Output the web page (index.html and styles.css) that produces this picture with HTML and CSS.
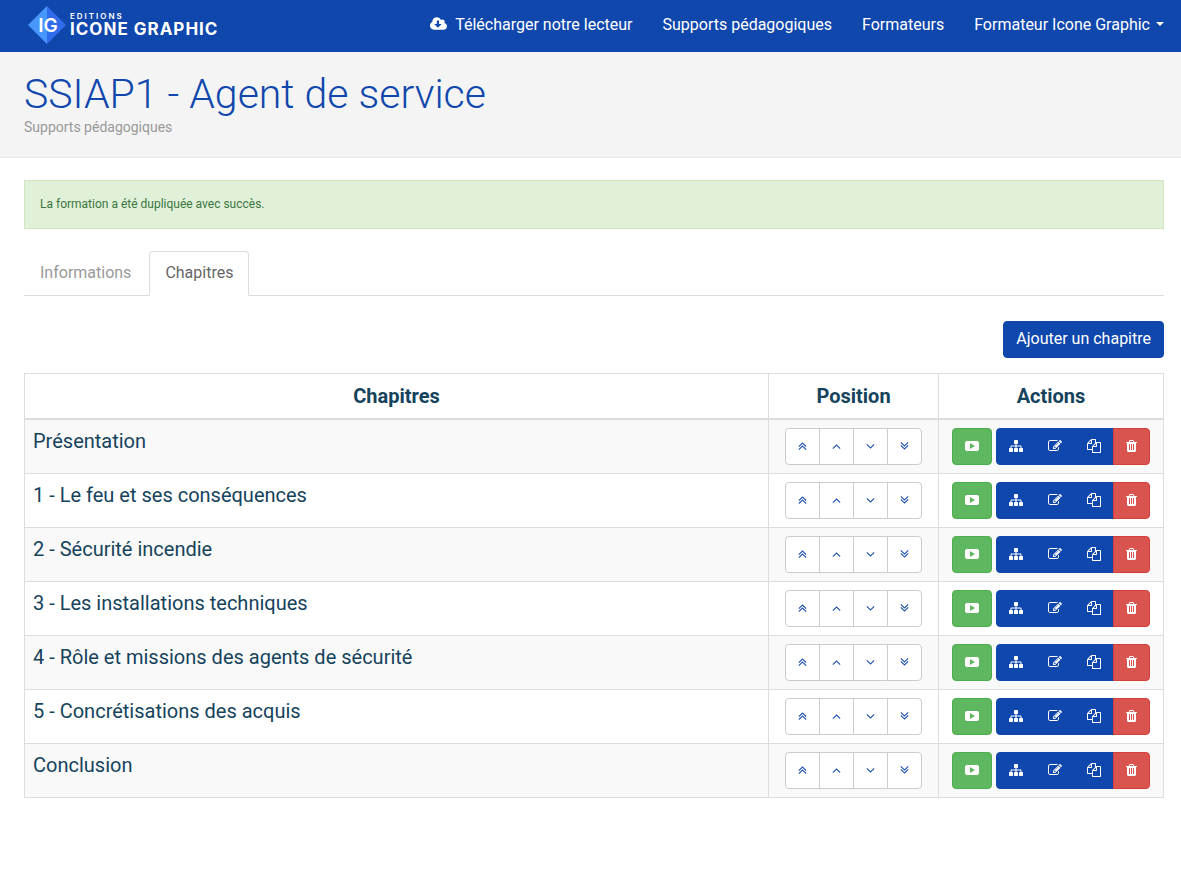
FILE: index.html
```html
<!DOCTYPE html>
<html lang="fr">
<head>
  <meta charset="utf-8">
  <title>SSIAP1 - Agent de service</title>
  <meta name="viewport" content="width=device-width, initial-scale=1">
  <link rel="stylesheet" href="styles.css">
</head>
<body>
  <!-- Icons -->
  <svg class="sprite" aria-hidden="true">
    <symbol id="cloud-download" viewBox="0 0 1920 1792"><path d="M1280 928q0-14-9-23t-23-9h-224v-352q0-13-9.500-22.500t-22.500-9.500h-192q-13 0-22.500 9.500t-9.500 22.500v352h-224q-13 0-22.500 9.500t-9.500 22.500q0 14 9 23l352 352q9 9 23 9t23-9l351-351q10-12 10-24zm640 224q0 159-112.500 271.500t-271.500 112.500h-1088q-185 0-316.500-131.500t-131.500-316.500q0-130 70-240t188-165q-2-30-2-43 0-212 150-362t362-150q156 0 285.500 87t188.500 231q71-62 166-62 106 0 181 75t75 181q0 76-41 138 130 31 213.500 135.500t83.500 238.500z"/></symbol>
    <symbol id="play" viewBox="0 0 14 14"><path fill-rule="evenodd" d="M2 2H12Q14 2 14 4V10Q14 12 12 12H2Q0 12 0 10V4Q0 2 2 2zM5 4V10L10 7z"/></symbol>
    <symbol id="sitemap" viewBox="0 0 1792 1792"><path d="M1792 1248v320q0 40-28 68t-68 28h-320q-40 0-68-28t-28-68v-320q0-40 28-68t68-28h96v-192h-512v192h96q40 0 68 28t28 68v320q0 40-28 68t-68 28h-320q-40 0-68-28t-28-68v-320q0-40 28-68t68-28h96v-192h-512v192h96q40 0 68 28t28 68v320q0 40-28 68t-68 28h-320q-40 0-68-28t-28-68v-320q0-40 28-68t68-28h96v-192q0-52 38-90t90-38h512v-192h-96q-40 0-68-28t-28-68v-320q0-40 28-68t68-28h320q40 0 68 28t28 68v320q0 40-28 68t-68 28h-96v192h512q52 0 90 38t38 90v192h96q40 0 68 28t28 68z"/></symbol>
    <symbol id="edit" viewBox="0 0 1792 1792"><path d="M888 1184l116-116-152-152-116 116v56h96v96h56zm440-720q-16-16-33 1l-350 350q-17 17-1 33t33-1l350-350q17-17 1-33zm80 594v190q0 119-84.500 203.500t-203.500 84.500h-832q-119 0-203.500-84.500t-84.500-203.500v-832q0-119 84.500-203.500t203.500-84.500h832q63 0 117 25 15 7 18 23 3 17-9 29l-49 49q-14 14-32 8-23-6-45-6h-832q-66 0-113 47t-47 113v832q0 66 47 113t113 47h832q66 0 113-47t47-113v-126q0-13 9-22l64-64q15-15 35-7t20 29zm-96-738l288 288-672 672h-288v-288zm444 132l-92 92-288-288 92-92q28-28 68-28t68 28l152 152q28 28 28 68t-28 68z"/></symbol>
    <symbol id="copy" viewBox="0 0 1792 1792"><path d="M1696 384q40 0 68 28t28 68v1216q0 40-28 68t-68 28h-960q-40 0-68-28t-28-68v-288h-544q-40 0-68-28t-28-68v-672q0-40 20-88t48-76l408-408q28-28 76-48t88-20h416q40 0 68 28t28 68v328q68-40 128-40h416zm-544 213l-299 299h299v-299zm-640-384l-299 299h299v-299zm196 647l316-316v-416h-384v416q0 40-28 68t-68 28h-416v640h512v-256q0-40 20-88t48-76zm956 804v-1152h-384v416q0 40-28 68t-68 28h-416v640h896z"/></symbol>
    <symbol id="trash" viewBox="192 0 1408 1792"><path d="M704 1376v-704q0-14-9-23t-23-9h-64q-14 0-23 9t-9 23v704q0 14 9 23t23 9h64q14 0 23-9t9-23zm256 0v-704q0-14-9-23t-23-9h-64q-14 0-23 9t-9 23v704q0 14 9 23t23 9h64q14 0 23-9t9-23zm256 0v-704q0-14-9-23t-23-9h-64q-14 0-23 9t-9 23v704q0 14 9 23t23 9h64q14 0 23-9t9-23zm-544-992h448l-48-117q-7-9-17-11h-317q-10 2-17 11zm928 32v64q0 14-9 23t-23 9h-96v948q0 83-47 143.500t-113 60.500h-832q-66 0-113-58.500t-47-141.500v-952h-96q-14 0-23-9t-9-23v-64q0-14 9-23t23-9h309l70-167q15-37 54-63t79-26h320q40 0 79 26t54 63l70 167h309q14 0 23 9t9 23z"/></symbol>
    <symbol id="up" viewBox="320 0 1152 1792"><path d="M1395 1184q0 13-10 23l-50 50q-10 10-23 10t-23-10l-393-393-393 393q-10 10-23 10t-23-10l-50-50q-10-10-10-23t10-23l466-466q10-10 23-10t23 10l466 466q10 10 10 23z"/></symbol>
    <symbol id="down" viewBox="320 0 1152 1792"><path d="M1395 736q0 13-10 23l-466 466q-10 10-23 10t-23-10l-466-466q-10-10-10-23t10-23l50-50q10-10 23-10t23 10l393 393 393-393q10-10 23-10t23 10l50 50q10 10 10 23z"/></symbol>
    <symbol id="double-up" viewBox="320 0 1152 1792"><path d="M1395 1312q0 13-10 23l-50 50q-10 10-23 10t-23-10l-393-393-393 393q-10 10-23 10t-23-10l-50-50q-10-10-10-23t10-23l466-466q10-10 23-10t23 10l466 466q10 10 10 23zm0-384q0 13-10 23l-50 50q-10 10-23 10t-23-10l-393-393-393 393q-10 10-23 10t-23-10l-50-50q-10-10-10-23t10-23l466-466q10-10 23-10t23 10l466 466q10 10 10 23z"/></symbol>
    <symbol id="double-down" viewBox="320 0 1152 1792"><path d="M1395 864q0 13-10 23l-466 466q-10 10-23 10t-23-10l-466-466q-10-10-10-23t10-23l50-50q10-10 23-10t23 10l393 393 393-393q10-10 23-10t23 10l50 50q10 10 10 23zm0-384q0 13-10 23l-466 466q-10 10-23 10t-23-10l-466-466q-10-10-10-23t10-23l50-50q10-10 23-10t23 10l393 393 393-393q10-10 23-10t23 10l50 50q10 10 10 23z"/></symbol>
  </svg>

  <header class="navbar">
    <a class="brand" href="#">
      <svg class="brand-logo" viewBox="0 0 38 38" aria-hidden="true">
        <path fill="#4797ff" d="M19 0v38L0 19z"/>
        <path fill="#2f6bea" d="M19 0l19 19-19 19z"/>
        <text class="brand-initials" x="20" y="26" text-anchor="middle">IG</text>
      </svg>
      <span class="brand-text">
        <span class="brand-small">EDITIONS</span>
        <span class="brand-name">ICONE GRAPHIC</span>
      </span>
    </a>
    <nav class="menu">
      <a href="#"><svg class="icon-cloud"><use href="#cloud-download"/></svg>Télécharger notre lecteur</a>
      <a href="#">Supports pédagogiques</a>
      <a href="#">Formateurs</a>
      <a href="#">Formateur Icone Graphic<span class="caret"></span></a>
    </nav>
  </header>

  <div class="page-header">
    <h1>SSIAP1 - Agent de service</h1>
    <p>Supports pédagogiques</p>
  </div>

  <main class="content">
    <div class="alert" role="alert">La formation a été dupliquée avec succès.</div>

    <nav class="tabs">
      <a href="#">Informations</a>
      <a class="active" href="#">Chapitres</a>
    </nav>

    <div class="toolbar">
      <button class="btn btn-primary" type="button">Ajouter un chapitre</button>
    </div>

    <table class="table">
      <thead>
        <tr>
          <th>Chapitres</th>
          <th class="col-position">Position</th>
          <th class="col-actions">Actions</th>
        </tr>
      </thead>
      <tbody id="chapters"></tbody>
    </table>
  </main>

  <script src="script.js"></script>
</body>
</html>
```

FILE: styles.css
```css
* {
  box-sizing: border-box;
}

body {
  margin: 0;
  font-family: Roboto, Arial, sans-serif;
  font-size: 16px;
  line-height: 23px;
  color: #15435c;
  background-color: #fff;
}

a {
  text-decoration: none;
}

svg {
  display: block;
  fill: currentColor;
}

.sprite {
  display: none;
}

/* Navbar */
.navbar {
  display: flex;
  justify-content: space-between;
  align-items: center;
  height: 52px;
  padding: 0 17px 2px 28px;
  background-color: #0f47ad;
}

.brand {
  display: flex;
  align-items: center;
  gap: 4px;
  color: #fff;
}

.brand-logo {
  width: 38px;
  height: 38px;
}

.brand-initials {
  font-family: Inter, sans-serif;
  font-size: 19px;
  font-weight: 600;
  fill: #fff;
}

.brand-text {
  display: flex;
  flex-direction: column;
  font-family: Inter, sans-serif;
  font-weight: 700;
}

.brand-small {
  font-size: 8px;
  font-weight: 600;
  line-height: 8px;
  letter-spacing: 2px;
}

.brand-name {
  font-size: 17px;
  line-height: 18px;
  letter-spacing: 1px;
}

.menu {
  display: flex;
  gap: 30px;
  padding-bottom: 2px;
}

.menu a {
  display: flex;
  align-items: center;
  color: #fff;
}

.icon-cloud {
  width: 17px;
  height: 16px;
  margin-right: 8px;
}

.caret {
  margin-left: 6px;
  border-top: 4px solid #fff;
  border-left: 4px solid transparent;
  border-right: 4px solid transparent;
}

/* Page header */
.page-header {
  padding: 20px 17px 20px 24px;
  background-color: #f4f4f4;
  border-bottom: 1px solid #e7e7e7;
}

.page-header h1 {
  margin: 0;
  font-size: 41px;
  font-weight: 300;
  line-height: 45px;
  color: #0f47ad;
}

.page-header p {
  margin: 0;
  font-size: 14px;
  line-height: 20px;
  color: #999;
}

.content {
  padding: 22px 17px 24px 24px;
}

.alert {
  padding: 15px;
  font-size: 12px;
  line-height: 17px;
  color: #3c763d;
  background-color: #e0f0d9;
  border: 1px solid #d0e6c0;
}

/* Tabs */
.tabs {
  display: flex;
  gap: 2px;
  margin-top: 22px;
  border-bottom: 1px solid #ddd;
}

.tabs a {
  margin-bottom: -1px;
  padding: 9px 15px 11px;
  border: 1px solid transparent;
  border-radius: 4px 4px 0 0;
  color: #999;
}

.tabs .active {
  color: #666;
  background-color: #fff;
  border-color: #ddd #ddd #fff;
}

.toolbar {
  display: flex;
  justify-content: flex-end;
  margin: 25px 0 15px;
}

/* Buttons */
.btn {
  display: flex;
  align-items: center;
  height: 37px;
  padding: 0 12px 2px;
  font-family: inherit;
  font-size: 16px;
  line-height: 23px;
  color: #0f47ad;
  background-color: #fff;
  border: 1px solid #ccc;
  border-radius: 4px;
  cursor: pointer;
}

.btn-primary {
  color: #fff;
  background-color: #0f47ad;
  border-color: #0f47ad;
}

.btn-success {
  color: #fff;
  background-color: #5fb760;
  border-color: #4cae4c;
}

.btn-danger {
  color: #fff;
  background-color: #d9534f;
  border-color: #d43f3a;
}

.btn-group {
  display: flex;
}

.btn-group .btn + .btn {
  margin-left: -1px;
  border-top-left-radius: 0;
  border-bottom-left-radius: 0;
}

.btn-group .btn:not(:last-child) {
  border-top-right-radius: 0;
  border-bottom-right-radius: 0;
}

.icon {
  width: 14px;
  height: 14px;
}

.icon-angle {
  width: 9px;
}

.icon-trash {
  width: 11px;
}

/* Table */
.table {
  width: 100%;
  border-collapse: collapse;
  font-size: 20px;
  line-height: 28px;
}

.table th,
.table td {
  padding: 8px;
  border: 1px solid #ddd;
  vertical-align: top;
}

.table th {
  border-bottom-width: 2px;
  font-weight: 700;
}

.table td {
  line-height: 26px;
}

.table tbody tr:nth-child(odd) {
  background-color: #f9f9f9;
}

.col-position {
  width: 170px;
}

.col-actions {
  width: 225px;
}

.cell-buttons {
  display: flex;
  justify-content: center;
  gap: 4px;
}
```

FILE: script.js
```js
const chapters = [
  'Présentation',
  '1 - Le feu et ses conséquences',
  '2 - Sécurité incendie',
  '3 - Les installations techniques',
  '4 - Rôle et missions des agents de sécurité',
  '5 - Concrétisations des acquis',
  'Conclusion'
];

function button(icon, label, btnClass = '', iconClass = '') {
  return `<button class="btn ${btnClass}" type="button" aria-label="${label}"><svg class="icon ${iconClass}"><use href="#${icon}"/></svg></button>`;
}

document.getElementById('chapters').innerHTML = chapters.map((title) => `
  <tr>
    <td>${title}</td>
    <td>
      <div class="cell-buttons">
        <div class="btn-group">
          ${button('double-up', 'Premier', '', 'icon-angle')}
          ${button('up', 'Monter', '', 'icon-angle')}
          ${button('down', 'Descendre', '', 'icon-angle')}
          ${button('double-down', 'Dernier', '', 'icon-angle')}
        </div>
      </div>
    </td>
    <td>
      <div class="cell-buttons">
        ${button('play', 'Lire', 'btn-success')}
        <div class="btn-group">
          ${button('sitemap', 'Plan', 'btn-primary')}
          ${button('edit', 'Modifier', 'btn-primary')}
          ${button('copy', 'Dupliquer', 'btn-primary')}
          ${button('trash', 'Supprimer', 'btn-danger', 'icon-trash')}
        </div>
      </div>
    </td>
  </tr>`).join('');
```
